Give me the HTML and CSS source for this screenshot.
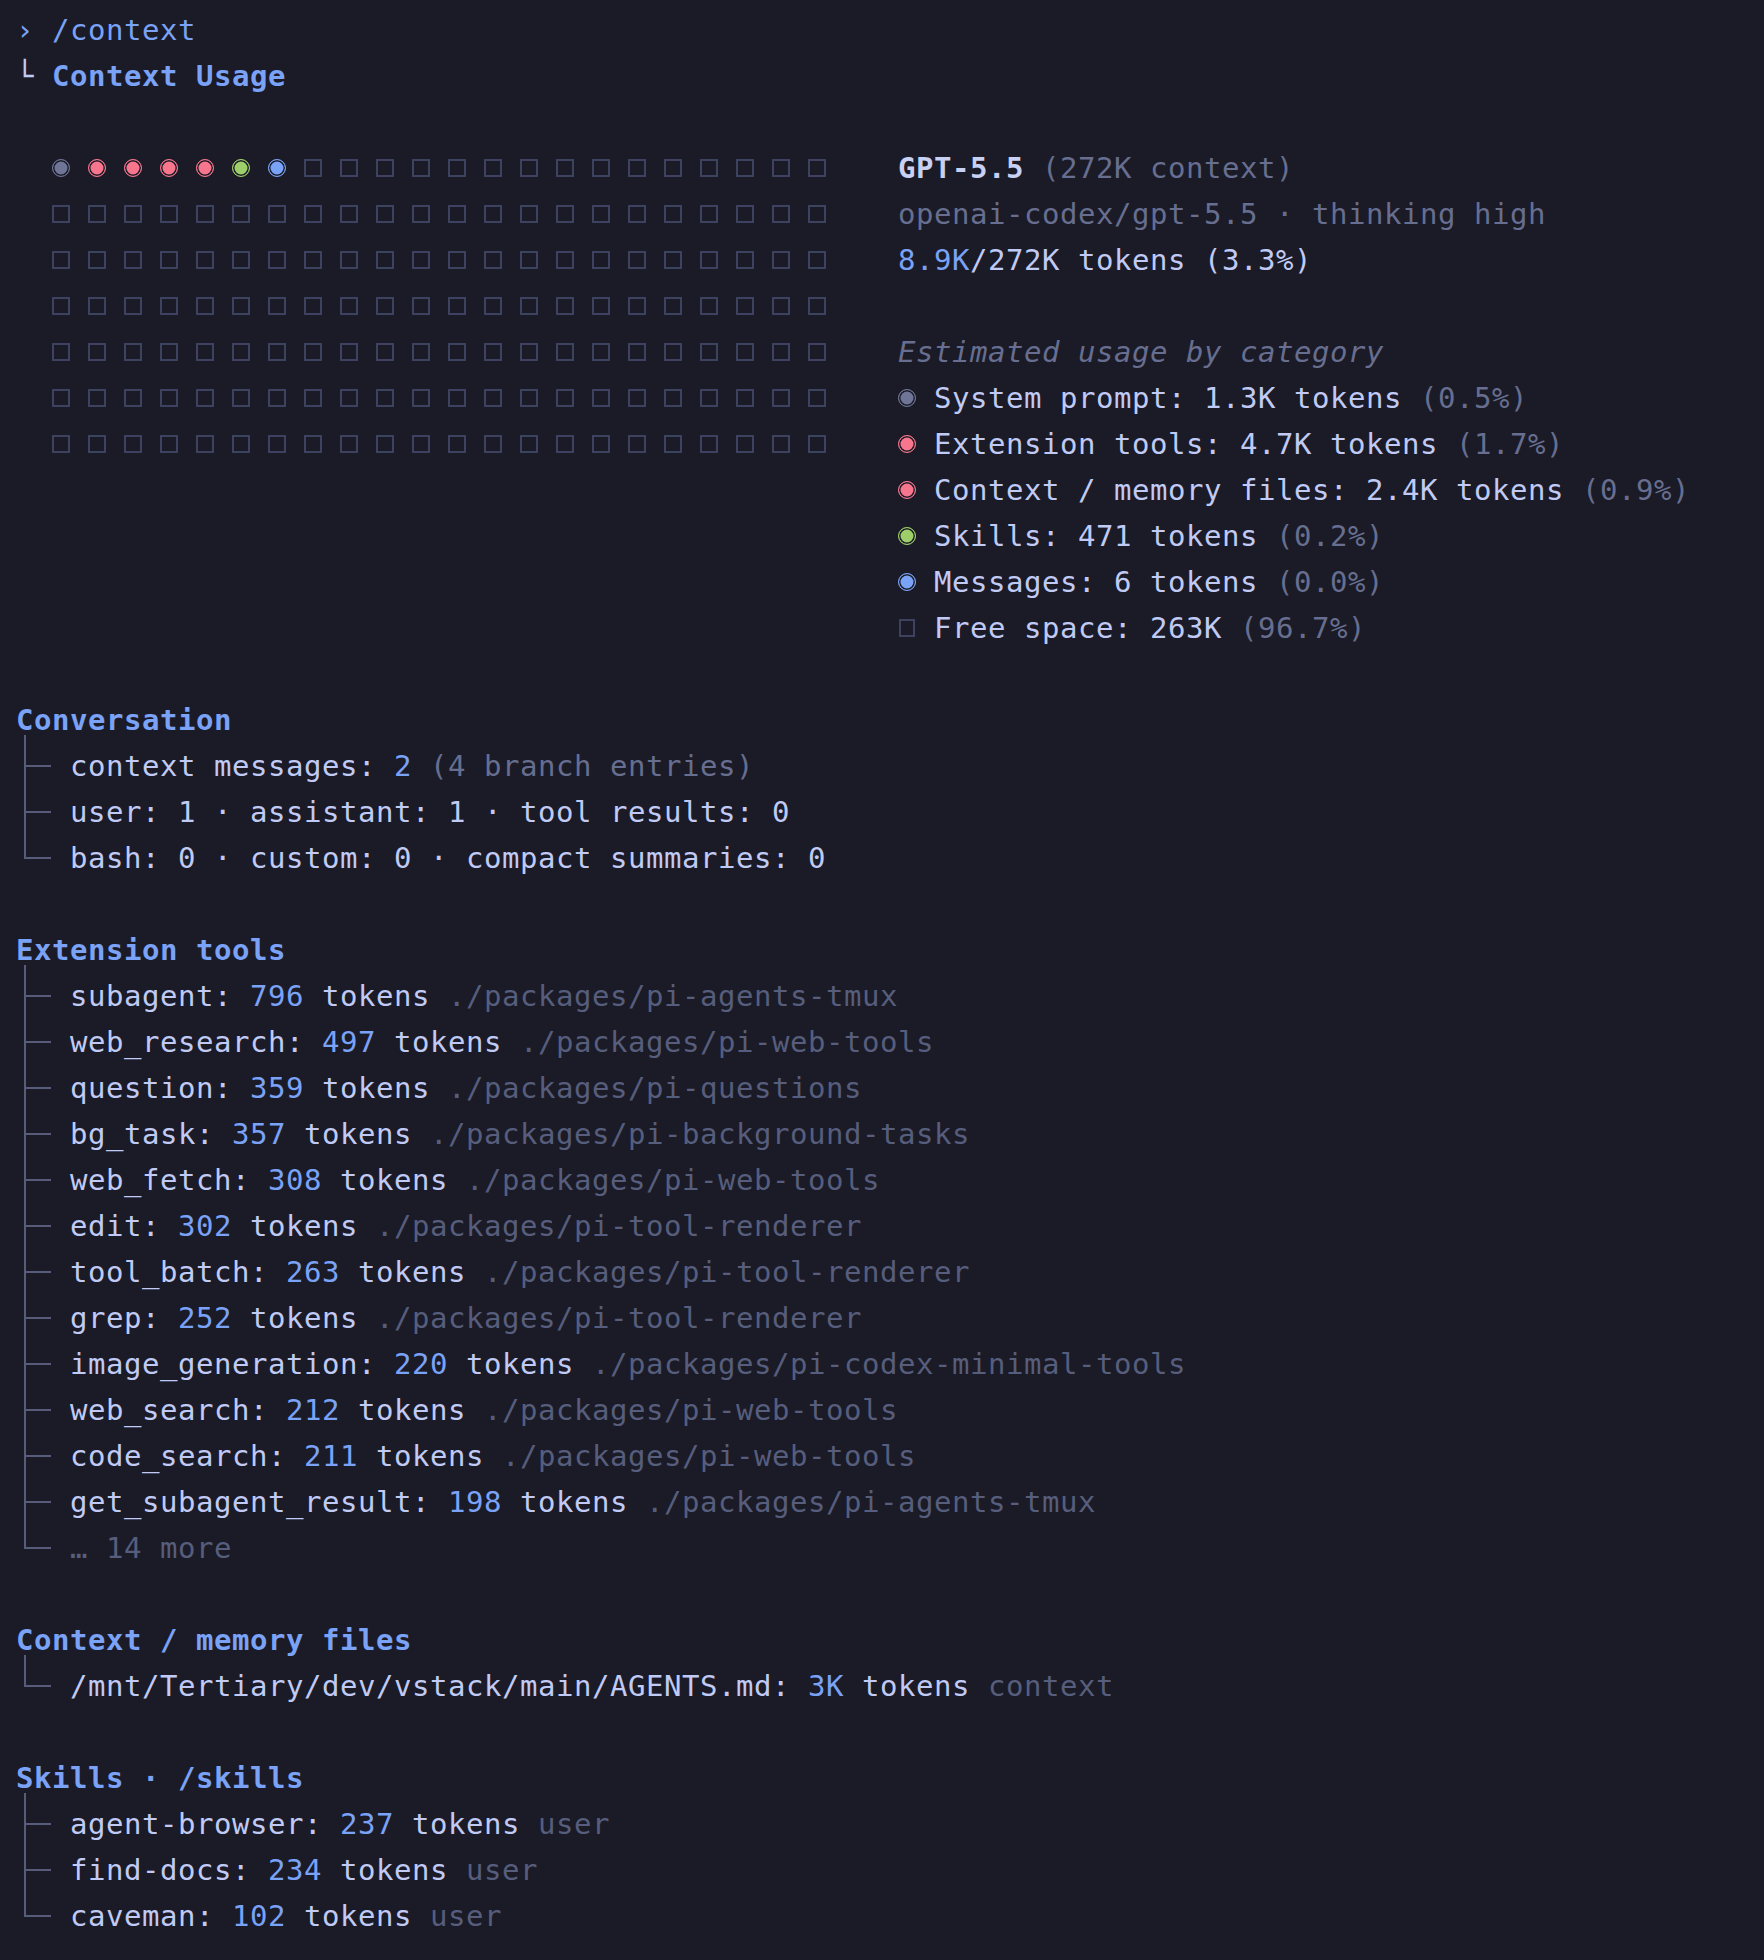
FILE: index.html
```html
<!DOCTYPE html>
<html lang="en">
<head>
<meta charset="utf-8">
<title>Context Usage</title>
<link rel="stylesheet" href="styles.css">
</head>
<body>
<main class="term">
  <div class="line"><span class="blue">›</span> <span class="blue">/context</span></div>
  <div class="line"><span class="corner">└</span> <span class="heading">Context Usage</span></div>
  <div class="line"></div>

  <section class="usage">
    <div class="grid" id="grid"></div>
    <div class="info">
      <div class="line"><span class="strong">GPT-5.5</span> <span class="dim">(272K context)</span></div>
      <div class="line dim">openai-codex/gpt-5.5 · thinking high</div>
      <div class="line"><span class="blue">8.9K</span>/272K tokens (3.3%)</div>
      <div class="line"></div>
      <div class="line dim italic">Estimated usage by category</div>
      <div class="line legend"><span class="cell"><span class="sym dot gray"></span></span>System prompt: 1.3K tokens <span class="dim">(0.5%)</span></div>
      <div class="line legend"><span class="cell"><span class="sym dot red"></span></span>Extension tools: 4.7K tokens <span class="dim">(1.7%)</span></div>
      <div class="line legend"><span class="cell"><span class="sym dot red"></span></span>Context / memory files: 2.4K tokens <span class="dim">(0.9%)</span></div>
      <div class="line legend"><span class="cell"><span class="sym dot green"></span></span>Skills: 471 tokens <span class="dim">(0.2%)</span></div>
      <div class="line legend"><span class="cell"><span class="sym dot bluedot"></span></span>Messages: 6 tokens <span class="dim">(0.0%)</span></div>
      <div class="line legend"><span class="cell"><span class="sym sq small"></span></span>Free space: 263K <span class="dim">(96.7%)</span></div>
    </div>
  </section>

  <div class="line"></div>
  <div class="line heading">Conversation</div>
  <div class="tree">
    <div class="item"><span class="branch"></span><span class="txt">context messages: <span class="blue">2</span> <span class="dim">(4 branch entries)</span></span></div>
    <div class="item"><span class="branch"></span><span class="txt">user: 1 · assistant: 1 · tool results: 0</span></div>
    <div class="item last"><span class="branch"></span><span class="txt">bash: 0 · custom: 0 · compact summaries: 0</span></div>
  </div>

  <div class="line"></div>
  <div class="line heading">Extension tools</div>
  <div class="tree">
    <div class="item"><span class="branch"></span><span class="txt">subagent: <span class="blue">796</span> tokens <span class="path">./packages/pi-agents-tmux</span></span></div>
    <div class="item"><span class="branch"></span><span class="txt">web_research: <span class="blue">497</span> tokens <span class="path">./packages/pi-web-tools</span></span></div>
    <div class="item"><span class="branch"></span><span class="txt">question: <span class="blue">359</span> tokens <span class="path">./packages/pi-questions</span></span></div>
    <div class="item"><span class="branch"></span><span class="txt">bg_task: <span class="blue">357</span> tokens <span class="path">./packages/pi-background-tasks</span></span></div>
    <div class="item"><span class="branch"></span><span class="txt">web_fetch: <span class="blue">308</span> tokens <span class="path">./packages/pi-web-tools</span></span></div>
    <div class="item"><span class="branch"></span><span class="txt">edit: <span class="blue">302</span> tokens <span class="path">./packages/pi-tool-renderer</span></span></div>
    <div class="item"><span class="branch"></span><span class="txt">tool_batch: <span class="blue">263</span> tokens <span class="path">./packages/pi-tool-renderer</span></span></div>
    <div class="item"><span class="branch"></span><span class="txt">grep: <span class="blue">252</span> tokens <span class="path">./packages/pi-tool-renderer</span></span></div>
    <div class="item"><span class="branch"></span><span class="txt">image_generation: <span class="blue">220</span> tokens <span class="path">./packages/pi-codex-minimal-tools</span></span></div>
    <div class="item"><span class="branch"></span><span class="txt">web_search: <span class="blue">212</span> tokens <span class="path">./packages/pi-web-tools</span></span></div>
    <div class="item"><span class="branch"></span><span class="txt">code_search: <span class="blue">211</span> tokens <span class="path">./packages/pi-web-tools</span></span></div>
    <div class="item"><span class="branch"></span><span class="txt">get_subagent_result: <span class="blue">198</span> tokens <span class="path">./packages/pi-agents-tmux</span></span></div>
    <div class="item last"><span class="branch"></span><span class="txt path">… 14 more</span></div>
  </div>

  <div class="line"></div>
  <div class="line heading">Context / memory files</div>
  <div class="tree">
    <div class="item last"><span class="branch"></span><span class="txt">/mnt/Tertiary/dev/vstack/main/AGENTS.md: <span class="blue">3K</span> tokens <span class="path">context</span></span></div>
  </div>

  <div class="line"></div>
  <div class="line heading">Skills · /skills</div>
  <div class="tree">
    <div class="item"><span class="branch"></span><span class="txt">agent-browser: <span class="blue">237</span> tokens <span class="path">user</span></span></div>
    <div class="item"><span class="branch"></span><span class="txt">find-docs: <span class="blue">234</span> tokens <span class="path">user</span></span></div>
    <div class="item last"><span class="branch"></span><span class="txt">caveman: <span class="blue">102</span> tokens <span class="path">user</span></span></div>
  </div>
</main>
<script src="grid.js"></script>
</body>
</html>
```

FILE: grid.js
```js
(function () {
  var grid = document.getElementById('grid');
  var first = ['gray', 'red', 'red', 'red', 'red', 'green', 'bluedot'];
  var total = 22 * 7;
  for (var i = 0; i < total; i++) {
    var cell = document.createElement('span');
    cell.className = 'gcell';
    var sym = document.createElement('span');
    if (i < first.length) {
      sym.className = 'sym dot ' + first[i];
    } else {
      sym.className = 'sym sq';
    }
    cell.appendChild(sym);
    grid.appendChild(cell);
  }
})();
```

FILE: styles.css
```css
html, body {
  margin: 0;
  padding: 0;
  background: #1a1b26;
}

.term {
  padding: 7px 16px 0 16px;
  font-family: "DejaVu Sans Mono", "Liberation Mono", monospace;
  font-size: 29px;
  letter-spacing: 0.54px;
  line-height: 46px;
  color: #c0caf5;
}

.line,
.tree .item {
  height: 46px;
  white-space: pre;
}

.blue { color: #7aa2f7; }
.corner { color: #c0caf5; }
.heading { color: #7aa2f7; font-weight: bold; }
.strong { color: #c8d0f4; font-weight: bold; }
.dim { color: #676e90; }
.path { color: #575d7c; }
.italic { font-style: italic; }

/* usage section */
.usage {
  display: flex;
  align-items: flex-start;
}

.grid {
  display: grid;
  grid-template-columns: repeat(22, 36px);
  grid-auto-rows: 46px;
  margin-left: 36px;
}

.gcell, .cell {
  display: inline-flex;
  align-items: center;
  justify-content: center;
  width: 18px;
  height: 46px;
  vertical-align: top;
}

.info {
  margin-left: 54px;
}

.legend .cell {
  margin-right: 18px;
}

.sym {
  display: block;
  box-sizing: border-box;
  flex: none;
}

.dot {
  width: 18px;
  height: 18px;
  border-radius: 50%;
  border: 1.5px solid currentColor;
  background: currentColor;
  box-shadow: inset 0 0 0 1.5px #1a1b26;
}

.dot.gray { color: #6f7596; }
.dot.red { color: #f7768e; }
.dot.green { color: #9ece6a; }
.dot.bluedot { color: #7aa2f7; }

.sq {
  width: 18px;
  height: 18px;
  border: 2px solid #3d4260;
}

.sq.small {
  width: 16px;
  height: 18px;
}

/* tree */
.tree .item {
  display: flex;
}

.branch {
  position: relative;
  flex: none;
  width: 54px;
  height: 46px;
}

.branch::before {
  content: "";
  position: absolute;
  left: 8px;
  top: -8px;
  bottom: 0;
  width: 2px;
  background: #565c7a;
}

.item + .item .branch::before {
  top: 0;
}

.item.last .branch::before {
  bottom: 22px;
}

.branch::after {
  content: "";
  position: absolute;
  left: 8px;
  top: 22px;
  width: 27px;
  height: 2px;
  background: #565c7a;
}
```
